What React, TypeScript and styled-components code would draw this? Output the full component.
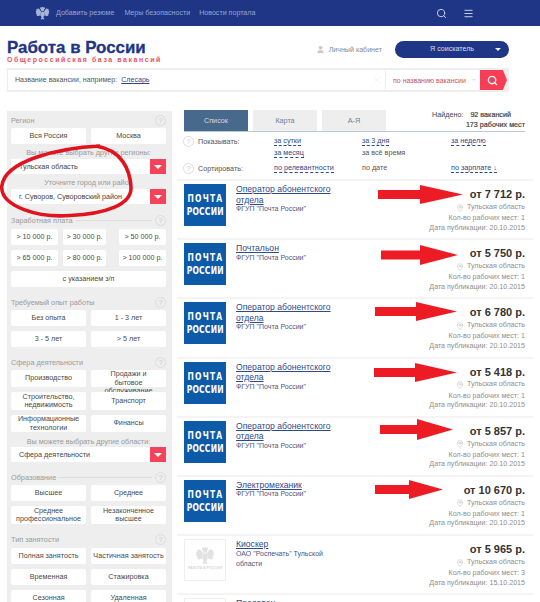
import React from "react";
import styled, { createGlobalStyle } from "styled-components";
import { MapPin, Menu, Search, User, X } from "lucide-react";

const GlobalStyle = createGlobalStyle`
  html, body {
    margin: 0;
    height: 602px;
    overflow: hidden;
    background: #fff;
    font-family: "Liberation Sans", Arial, sans-serif;
  }
`;

const Page = styled.div`
  position: relative;
  width: 540px;
  height: 602px;
  overflow: hidden;
`;

/* top bar */
const Nav = styled.div`
  display: flex;
  align-items: center;
  height: 26px;
  padding-left: 35px;
  background: #1f3585;
  color: #98a7d0;
  font-size: 7.1px;
`;

const NavLink = styled.span<{ $gap: number }>`
  margin-left: ${(p) => p.$gap}px;
`;

const NavIcons = styled.div`
  display: flex;
  align-items: center;
  gap: 16px;
  margin-left: auto;
  margin-right: 66px;
  color: #d5dbee;
`;

/* logo row */
const Header = styled.div`
  display: flex;
  align-items: flex-start;
  height: 42px;
  padding: 14px 31px 0 7px;
  box-sizing: border-box;
`;

const Brand = styled.div`
  width: 150px;
`;

const BrandTitle = styled.div`
  color: #1f3585;
  font-size: 16.9px;
  font-weight: bold;
  line-height: 16px;
  -webkit-text-stroke: 0.3px #1f3585;
  white-space: nowrap;
`;

const BrandSub = styled.div`
  color: #e9505f;
  font-size: 7px;
  font-weight: bold;
  line-height: 8px;
  letter-spacing: 1.55px;
  white-space: nowrap;
`;

const Cabinet = styled.div`
  display: flex;
  align-items: center;
  gap: 4px;
  height: 17px;
  margin: 1px 13px 0 auto;
  color: #8b8b8b;
  font-size: 7.1px;
`;

const RoleButton = styled.div`
  position: relative;
  width: 114px;
  height: 17px;
  margin-top: 1px;
  border-radius: 9px;
  background: #1f3585;
  color: #d9def0;
  font-size: 7.1px;
  line-height: 17px;
  text-align: center;
  &::after {
    content: "";
    position: absolute;
    right: 8px;
    top: 7px;
    border: 3px solid transparent;
    border-top: 3px solid #e8ebf5;
    border-bottom: 0;
  }
`;

/* search */
const SearchBar = styled.div`
  display: flex;
  width: 502px;
  height: 24px;
  margin: 0 0 18px 7px;
  padding: 2px 2px 2px 1px;
  box-sizing: border-box;
  background: #eee;
`;

const SearchField = styled.div`
  display: flex;
  align-items: center;
  flex: 1;
  padding: 0 3px 0 7px;
  background: #fff;
  color: #555;
  font-size: 7.1px;
`;

const Example = styled.span`
  margin-left: 4px;
  color: #2f4a8a;
  text-decoration: underline;
`;

const ClearIcon = styled(X)`
  margin-left: auto;
  color: #e4e4e4;
`;

const SearchMode = styled.div`
  display: flex;
  align-items: center;
  width: 95px;
  padding-left: 7px;
  box-sizing: border-box;
  border-left: 1px solid #eee;
  background: #fff;
  color: #c8525c;
  font-size: 7px;
  white-space: nowrap;
  &::after {
    content: "";
    margin-left: 6px;
    border: 2.5px solid transparent;
    border-top: 2.5px solid #ddd;
    border-bottom: 0;
  }
`;

const SearchButton = styled.div`
  display: flex;
  align-items: center;
  justify-content: center;
  width: 27px;
  padding-right: 3px;
  box-sizing: border-box;
  background: #f63f55;
  color: #fff;
  clip-path: polygon(0 0, 85% 0, 100% 50%, 85% 100%, 0 100%);
`;

/* main columns */
const Main = styled.div`
  display: flex;
  align-items: flex-start;
  padding-left: 7px;
`;

const Sidebar = styled.aside`
  width: 165px;
  height: 500px;
  margin-top: 1px;
  padding: 3px 6px 0 4px;
  box-sizing: border-box;
  background: #eee;
`;

const Help = styled.span`
  display: inline-flex;
  align-items: center;
  justify-content: center;
  flex: none;
  order: 1;
  width: 9px;
  height: 9px;
  border: 1px solid #ddd;
  border-radius: 50%;
  color: #ccc;
  font-size: 7.5px;
`;

const SectionLabel = styled.div<{ $top?: number; $bottom?: number; $line?: boolean }>`
  display: flex;
  align-items: center;
  gap: 3px;
  height: 13px;
  margin-top: ${(p) => p.$top ?? 0}px;
  margin-bottom: ${(p) => p.$bottom ?? 1}px;
  color: #9a9a9a;
  font-size: 7.3px;
  &::after {
    content: "";
    flex: 1;
    height: 1px;
    background: ${(p) => (p.$line ? "#ddd" : "transparent")};
  }
`;

const OptionGrid = styled.div`
  display: grid;
  grid-template-columns: 75px 75px;
  gap: 5px;
`;

const SalaryGrid = styled(OptionGrid)`
  grid-template-columns: 47px 43px 3px 47px;
  & > :nth-child(3n) {
    grid-column: 4;
  }
  & > :nth-child(7) {
    grid-column: 1 / -1;
  }
`;

const Option = styled.div<{ $h?: number; $spill?: boolean }>`
  display: flex;
  align-items: ${(p) => (p.$spill ? "flex-start" : "center")};
  justify-content: center;
  height: ${(p) => p.$h ?? 16}px;
  border-radius: 2px;
  background: #fff;
  color: #4a4a4a;
  font-size: 7.2px;
  line-height: 8.5px;
  text-align: center;
  white-space: pre-line;
`;

const SubLabel = styled.div<{ $pad?: number }>`
  height: 15px;
  padding-top: ${(p) => p.$pad ?? 4}px;
  box-sizing: border-box;
  color: #9a9a9a;
  font-size: 7.3px;
  line-height: 9px;
  text-align: center;
  white-space: nowrap;
`;

const Select = styled.div`
  display: flex;
  align-items: center;
  height: 15px;
  padding-left: 8px;
  background: #fff;
  color: #444;
  font-size: 7.2px;
`;

const SelectArrow = styled.span`
  position: relative;
  width: 16px;
  height: 15px;
  margin-left: auto;
  background: #f5435a;
  &::after {
    content: "";
    position: absolute;
    left: 4px;
    top: 6px;
    border: 4px solid transparent;
    border-top: 4px solid #fff;
    border-bottom: 0;
  }
`;

const Content = styled.main`
  width: 356px;
  margin-left: 5px;
`;

const TabBar = styled.div`
  display: flex;
  align-items: flex-start;
  gap: 5px;
  height: 22px;
  margin: 0 8px 0 7px;
  border-bottom: 1px solid #b9c9d8;
  box-sizing: border-box;
`;

const Tab = styled.div<{ $active?: boolean }>`
  width: 64px;
  height: 21px;
  background: ${(p) => (p.$active ? "#47698c" : "#eee")};
  color: ${(p) => (p.$active ? "#cfdbe6" : "#6d8297")};
  font-size: 7.2px;
  line-height: 21px;
  text-align: center;
`;

const Found = styled.div`
  margin-left: auto;
  color: #444;
  font-size: 7.2px;
  line-height: 10px;
  text-align: right;
  white-space: nowrap;
`;

const FoundCount = styled.span<{ $after?: number; $before?: number }>`
  margin: 0 ${(p) => p.$after ?? 0}px 0 ${(p) => p.$before ?? 0}px;
  -webkit-text-stroke: 0.2px #444;
`;

const FilterRow = styled.div<{ $h: number; $pad?: number }>`
  display: grid;
  grid-template-columns: 15px 76px 88px 89px 1fr;
  height: ${(p) => p.$h}px;
  padding: ${(p) => p.$pad ?? 0}px 0 0 6px;
  color: #555;
  font-size: 7.2px;
  line-height: 11px;
`;

const FilterHelp = styled(Help)`
  order: 0;
`;

const FilterLink = styled.span<{ $plain?: boolean }>`
  align-self: start;
  justify-self: start;
  margin-bottom: 2px;
  border-bottom: ${(p) => (p.$plain ? "none" : "1px dashed #2f4a8a")};
  color: ${(p) => (p.$plain ? "#555" : "#2f4a8a")};
  line-height: 9px;
`;

const Stack = styled.div`
  display: flex;
  flex-direction: column;
  align-items: flex-start;
`;

const Vacancy = styled.article`
  position: relative;
  display: flex;
  height: 59.2px;
  padding: 3px 8px 0 7px;
  border-top: 2px solid #f4f4f4;
  box-sizing: border-box;
`;

const PostLogo = styled.div`
  display: flex;
  flex-direction: column;
  align-items: center;
  justify-content: center;
  flex: none;
  width: 42px;
  height: 42px;
  background: #0d5ba8;
  color: #fff;
  font-family: "DejaVu Sans Condensed", "DejaVu Sans", sans-serif;
  font-size: 10.5px;
  font-weight: bold;
  line-height: 13px;
`;

const PostWord = styled.span<{ $spread: number }>`
  display: inline-block;
  letter-spacing: ${(p) => p.$spread}px;
  transform: scaleX(0.8);
`;

const PlainLogo = styled.div`
  display: flex;
  flex-direction: column;
  align-items: center;
  flex: none;
  width: 42px;
  height: 42px;
  padding-top: 6px;
  box-sizing: border-box;
  border: 1px solid #eee;
  color: #d8d8d8;
  font-size: 3.5px;
  font-weight: bold;
  white-space: nowrap;
`;

const Info = styled.div`
  width: 112px;
  margin-left: 10px;
`;

const Title = styled.a`
  display: block;
  color: #2f4a8a;
  font-size: 8.6px;
  line-height: 10.5px;
  text-decoration: underline;
`;

const Company = styled.div`
  margin-top: -1px;
  color: #48597f;
  font-size: 7px;
  line-height: 10px;
`;

const Summary = styled.div`
  margin: 1px 0 0 auto;
  color: #8e8e8e;
  font-size: 7.1px;
  line-height: 9.5px;
  text-align: right;
  white-space: nowrap;
`;

const Price = styled.div`
  height: 16px;
  color: #333;
  font-size: 11px;
  font-weight: bold;
  line-height: 18px;
`;

const Region = styled.div`
  display: flex;
  align-items: center;
  justify-content: flex-end;
  gap: 3px;
  height: 11px;
  margin-top: 1px;
  margin-bottom: 1px;
`;

/* red marks drawn over the screenshot */
const Arrow = styled.svg<{ $left: number; $top: number; $w: number; $h: number }>`
  position: absolute;
  left: ${(p) => p.$left}px;
  top: ${(p) => p.$top}px;
  width: ${(p) => p.$w}px;
  height: ${(p) => p.$h}px;
`;

const Circle = styled.svg`
  position: absolute;
  left: 0;
  top: 140px;
  width: 140px;
  height: 82px;
  pointer-events: none;
`;

const Eagle = ({ size, color }: { size: number; color: string }) => (
  <svg width={size} height={size} viewBox="0 0 24 24" fill={color}>
    <path d="M9 1.500l1.500 1L12 1l1.500 1.500L15 1.500l1 2.500-1.500 1.500L14 8h-4l-.5-2.500L8 4z" />
    <path d="M9.500 8.500L7 5 5 3.500 3.500 5 2 4.500l.5 3L1 7.500 2 11l-.5.5L3 14l-.5 1L5 16.500 7 15l2 1z" />
    <path d="M14.500 8.500L17 5l2-1.500L20.500 5 22 4.500l-.5 3 1.500 0L22 11l.5.5L21 14l.5 1-2.500 1.500L17 15l-2 1z" />
    <path d="M9.500 9h5v7l-1 2 1.500 3-2 .5-1-1-1 1-2-.5 1.500-3-1-2z" />
  </svg>
);

const PostMark = () => (
  <PostLogo>
    <PostWord $spread={1.5}>ПОЧТА</PostWord>
    <PostWord $spread={0.3}>РОССИИ</PostWord>
  </PostLogo>
);

type ArrowBox = { left: number; top: number; w: number; h: number; head: number };

type Job = {
  title: string;
  company: string;
  price: string;
  seats: number;
  date: string;
  plain?: boolean;
  arrow?: ArrowBox;
};

const operator = "Оператор абонентского отдела";
const post = 'ФГУП "Почта России"';

const jobs: Job[] = [
  { title: operator, company: post, price: "от 7 712 р.", seats: 1, date: "20.10.2015", arrow: { left: 201, top: 4, w: 85, h: 19, head: 42 } },
  { title: "Почтальон", company: post, price: "от 5 750 р.", seats: 1, date: "20.10.2015", arrow: { left: 204, top: 5, w: 77, h: 20, head: 39 } },
  { title: operator, company: post, price: "от 6 780 р.", seats: 1, date: "20.10.2015", arrow: { left: 198, top: 3, w: 82, h: 19, head: 41 } },
  { title: operator, company: post, price: "от 5 418 р.", seats: 1, date: "20.10.2015", arrow: { left: 197, top: 4, w: 83, h: 19, head: 41 } },
  { title: operator, company: post, price: "от 5 857 р.", seats: 1, date: "20.10.2015", arrow: { left: 203, top: 1, w: 73, h: 21, head: 37 } },
  { title: "Электромеханик", company: post, price: "от 10 670 р.", seats: 1, date: "20.10.2015", arrow: { left: 198, top: 3, w: 68, h: 19, head: 34 } },
  { title: "Киоскер", company: 'ОАО "Роспечать" Тульской области', price: "от 5 965 р.", seats: 3, date: "15.10.2015", plain: true },
  { title: "Продавец", company: post, price: "от 6 000 р.", seats: 1, date: "15.10.2015", plain: true },
];

const RedArrow = ({ box }: { box: ArrowBox }) => {
  const mid = box.h / 2;
  const points = [
    `0,${mid - 4.5}`,
    `${box.head},${mid - 4.5}`,
    `${box.head},0`,
    `${box.w},${mid}`,
    `${box.head},${box.h}`,
    `${box.head},${mid + 4.5}`,
    `0,${mid + 4.5}`,
  ].join(" ");
  return (
    <Arrow $left={box.left} $top={box.top} $w={box.w} $h={box.h} viewBox={`0 0 ${box.w} ${box.h}`}>
      <polygon points={points} fill="#ed1c24" />
    </Arrow>
  );
};

const App = () => (
  <Page>
    <GlobalStyle />
    <Nav>
      <Eagle size={15} color="#a9b5d8" />
      <NavLink $gap={6}>Добавить резюме</NavLink>
      <NavLink $gap={10}>Меры безопасности</NavLink>
      <NavLink $gap={9}>Новости портала</NavLink>
      <NavIcons>
        <Search size={11} strokeWidth={2} />
        <Menu size={11} strokeWidth={2} />
      </NavIcons>
    </Nav>

    <Header>
      <Brand>
        <BrandTitle>Работа в России</BrandTitle>
        <BrandSub>Общероссийская база вакансий</BrandSub>
      </Brand>
      <Cabinet>
        <User size={9} color="#c8c8c8" fill="#c8c8c8" />
        Личный кабинет
      </Cabinet>
      <RoleButton>Я соискатель</RoleButton>
    </Header>

    <SearchBar>
      <SearchField>
        Название вакансии, например:
        <Example>Слесарь</Example>
        <ClearIcon size={10} strokeWidth={1} />
      </SearchField>
      <SearchMode>по названию вакансии</SearchMode>
      <SearchButton>
        <Search size={11} strokeWidth={3} />
      </SearchButton>
    </SearchBar>

    <Main>
      <Sidebar>
        <SectionLabel>
          Регион
          <Help>?</Help>
        </SectionLabel>
        <OptionGrid>
          <Option>Вся Россия</Option>
          <Option>Москва</Option>
        </OptionGrid>
        <SubLabel>Вы можете выбрать другие регионы:</SubLabel>
        <Select>
          Тульская область
          <SelectArrow />
        </Select>
        <SubLabel>Уточните город или район</SubLabel>
        <Select>
          г. Суворов, Суворовский район
          <SelectArrow />
        </Select>

        <SectionLabel $top={10} $bottom={2} $line>
          Заработная плата
          <Help>?</Help>
        </SectionLabel>
        <SalaryGrid>
          <Option>&gt; 10 000 р.</Option>
          <Option>&gt; 30 000 р.</Option>
          <Option>&gt; 50 000 р.</Option>
          <Option>&gt; 65 000 р.</Option>
          <Option>&gt; 80 000 р.</Option>
          <Option>&gt; 100 000 р.</Option>
          <Option>с указанием з/п</Option>
        </SalaryGrid>

        <SectionLabel $top={9}>
          Требуемый опыт работы
          <Help>?</Help>
        </SectionLabel>
        <OptionGrid>
          <Option>Без опыта</Option>
          <Option>1 - 3 лет</Option>
          <Option>3 - 5 лет</Option>
          <Option>&gt; 5 лет</Option>
        </OptionGrid>

        <SectionLabel $top={9}>
          Сфера деятельности
          <Help>?</Help>
        </SectionLabel>
        <OptionGrid>
          <Option $h={17}>Производство</Option>
          <Option $h={17} $spill>{"Продажи и\nбытовое\nобслуживание"}</Option>
          <Option $h={18}>{"Строительство,\nнедвижимость"}</Option>
          <Option $h={18}>Транспорт</Option>
          <Option $h={17}>{"Информационные\nтехнологии"}</Option>
          <Option $h={17}>Финансы</Option>
        </OptionGrid>
        <SubLabel $pad={5}>Вы можете выбрать другие области:</SubLabel>
        <Select>
          Сфера деятельности
          <SelectArrow />
        </Select>

        <SectionLabel $top={9} $line>
          Образование
          <Help>?</Help>
        </SectionLabel>
        <OptionGrid>
          <Option>Высшее</Option>
          <Option>Среднее</Option>
          <Option $h={18}>{"Среднее\nпрофессиональное"}</Option>
          <Option $h={18}>{"Незаконченное\nвысшее"}</Option>
        </OptionGrid>

        <SectionLabel $top={9} $bottom={2}>
          Тип занятости
          <Help>?</Help>
        </SectionLabel>
        <OptionGrid>
          <Option>Полная занятость</Option>
          <Option>Частичная занятость</Option>
          <Option>Временная</Option>
          <Option>Стажировка</Option>
          <Option>Сезонная</Option>
          <Option>Удаленная</Option>
        </OptionGrid>
      </Sidebar>

      <Content>
        <TabBar>
          <Tab $active>Список</Tab>
          <Tab>Карта</Tab>
          <Tab>А-Я</Tab>
          <Found>
            Найдено:
            <FoundCount $before={7} $after={14}>92 вакансий</FoundCount>
            <br />
            <FoundCount>173 рабочих мест</FoundCount>
          </Found>
        </TabBar>

        <FilterRow $h={27} $pad={4}>
          <FilterHelp>?</FilterHelp>
          <span>Показывать:</span>
          <Stack>
            <FilterLink>за сутки</FilterLink>
            <FilterLink>за месяц</FilterLink>
          </Stack>
          <Stack>
            <FilterLink>за 3 дня</FilterLink>
            <FilterLink $plain>за всё время</FilterLink>
          </Stack>
          <Stack>
            <FilterLink>за неделю</FilterLink>
          </Stack>
        </FilterRow>
        <FilterRow $h={16}>
          <FilterHelp>?</FilterHelp>
          <span>Сортировать:</span>
          <FilterLink>по релевантности</FilterLink>
          <FilterLink $plain>по дате</FilterLink>
          <FilterLink>по зарплате ↓</FilterLink>
        </FilterRow>

        {jobs.map((job, i) => (
          <Vacancy key={i}>
            {job.plain ? (
              <PlainLogo>
                <Eagle size={20} color="#e2e2e2" />
                <span>РАБОТА В РОССИИ</span>
              </PlainLogo>
            ) : (
              <PostMark />
            )}
            <Info>
              <Title>{job.title}</Title>
              <Company>{job.company}</Company>
            </Info>
            <Summary>
              <Price>{job.price}</Price>
              <Region>
                <MapPin size={8} color="#c8c8c8" />
                Тульская область
              </Region>
              <div>Кол-во рабочих мест: {job.seats}</div>
              <div>Дата публикации: {job.date}</div>
            </Summary>
            {job.arrow && <RedArrow box={job.arrow} />}
          </Vacancy>
        ))}
      </Content>
    </Main>

    <Circle viewBox="0 0 140 82">
      <path
        d="M100 6C60 8 5 20 1.800 46C0 67 40 78 70 75.500C105 74 132 65 131 47C130 30 122 10 96 6"
        fill="none"
        stroke="#e0141f"
        strokeWidth="3.600"
      />
    </Circle>
  </Page>
);

export default App;
